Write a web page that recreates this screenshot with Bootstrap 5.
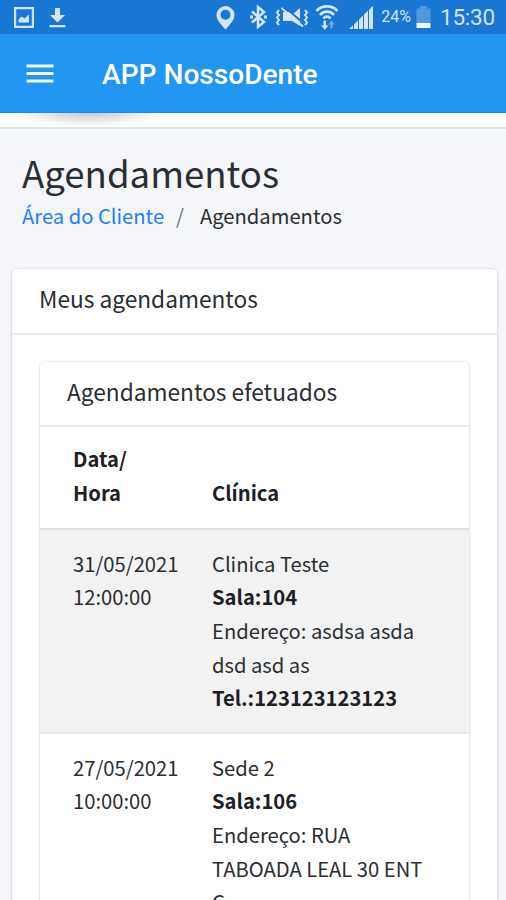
<!DOCTYPE html>
<html lang="pt-BR">
<head>
<meta charset="utf-8">
<meta name="viewport" content="width=device-width, initial-scale=1">
<title>APP NossoDente</title>
<link rel="stylesheet" href="https://cdn.jsdelivr.net/npm/bootstrap@5.3.0/dist/css/bootstrap.min.css">
<style>
  body { background: #f4f6f9; color: #2a2e32; font: 400 20.2px/33.7px "Noto Sans CJK SC", "Noto Sans", sans-serif; height: 900px; overflow: hidden; }
  .status-bar { height: 34px; background: #1976d2; color: #d3e5fa; font-family: Roboto, sans-serif; font-weight: 400; padding: 0 11px 0 14px; line-height: 36px; }
  .status-bar svg { display: block; flex: none; fill: #d3e5fa; }
  .battery-text { font-size: 16px; }
  .clock { font-size: 22.5px; font-weight: 400; letter-spacing: -.2px; }
  .app-bar { height: 79px; background: #2196f3; border-bottom: 1px solid #168be9; padding: 2px 26px 0; }
  .app-title { font: 500 28.1px/79px Roboto, sans-serif; }
  .page-strip { height: 16px; border-bottom: 2px solid #e1e4e7; background: radial-gradient(ellipse 75px 13px at 88px 0, #c9c9c9, #fff0) #fff; }
  .page-head { padding: 22px 22px 0; }
  .page-head h1 { font-size: 36.6px; line-height: 43px; font-weight: inherit; }
  .breadcrumb { --bs-breadcrumb-divider-color: #6c757d; --bs-breadcrumb-item-active-color: #2a2e32; --bs-breadcrumb-item-padding-x: 12px; margin-top: 5px; }
  .breadcrumb .breadcrumb-item + .breadcrumb-item::before { padding-right: 16px; }
  .breadcrumb a { color: #1f80f8; text-decoration: none; }
  .panel { border: 0; border-radius: 5px; background: #fff; color: inherit; box-shadow: 0 0 2px rgba(0,0,0,.16), 0 1px 3px rgba(0,0,0,.14); }
  .panel > .card-header { background: #fff; border-bottom: 2px solid #ebecec; padding: 16px 27px 20px; font-size: 22.7px; line-height: 28px; border-radius: 5px 5px 0 0; }
  .outer-panel { margin: 36px 9px 0 12px; height: 800px; }
  .outer-panel > .card-body { padding: 27px 28px; }
  .outer-panel .outer-panel, .panel .panel > .card-header { padding-bottom: 19px; }
  .schedule { table-layout: fixed; color: inherit; border-color: #e1e4e6; }
  .schedule > :not(caption) > * > * { padding: 17px 33px 16.5px 16px; color: inherit; border-bottom: 0; box-shadow: none; }
  .schedule > :not(caption) > * > :first-child { padding-left: 33px; padding-right: 12px; width: 156px; }
  .schedule thead th { padding-top: 15.5px !important; padding-bottom: 18px !important; vertical-align: bottom; border-bottom: 2px solid #dee2e6 !important; }
  .schedule th, .schedule b { font-weight: 700; color: #1c2024 !important; }
  .schedule tbody tr:first-child td { background: #f2f2f2; border-bottom: 2px solid #e6e9eb; }
</style>
<script src="https://cdn.jsdelivr.net/npm/bootstrap@5.3.0/dist/js/bootstrap.bundle.min.js"></script>
</head>
<body>
<div class="status-bar d-flex align-items-center">
  <svg width="20" height="21" viewBox="0 0 20 21"><path fill-rule="evenodd" d="M0 0h20v21H0zM2.200 2.200v16.600h15.600V2.200zM4.500 15.500v-3l3-3 3 2 4.500-4v8z"/></svg>
  <svg style="margin-left:15px" width="17" height="21" viewBox="0 0 17 21"><path d="M6 1h5v7h5l-7.500 7.500L1 8h5zM.5 18h16v2.300H.5z"/></svg>
  <div class="d-flex align-items-center ms-auto">
    <svg width="19" height="25" viewBox="0 0 19 25"><path fill-rule="evenodd" d="M9.500 1a9 9 0 0 1 9 9c0 5-4.500 9.500-9 14.500C5 19.500.5 15 .5 10a9 9 0 0 1 9-9zm0 3.800a5 5 0 1 0 0 10 5 5 0 0 0 0-10z"/></svg>
    <svg width="17" height="24" viewBox="0 0 17 24" style="margin-left:15px"><path d="M2 6.500l12 10.500-6 5V2l6 5L2 17.500" style="fill:none;stroke:#d3e5fa;stroke-width:2.500"/><path d="M0 10.500h3v3H0zM14 10.500h3v3h-3z"/></svg>
    <svg width="34" height="22" viewBox="0 0 34 22" style="margin-left:8px"><path d="M8 6h6l4 2 7-6v18l-8-5H8z"/><path d="M8.500 0L30 18.500" style="stroke:#1976d2;stroke-width:2"/><path d="M6.500 2L28 20.500M4 4l-2 2.500L4 9l-2 2.500L4 14l-2 2.500L4 19M30 4l2 2.500L30 9l2 2.500-2 2.500 2 2.500L30 19" style="fill:none;stroke:#d3e5fa;stroke-width:2"/></svg>
    <svg width="24" height="26" viewBox="0 0 24 26" style="margin-left:6px"><path d="M1.500 7C7 .8 17 .8 22.500 7M5 11c3.500-4.500 10.500-4.500 14 0M8.500 14.500c2-2.500 5-2.500 7 0" style="fill:none;stroke:#d3e5fa;stroke-width:2.700"/><path d="M8.500 16.500h2.500v5h2.500l-3.700 4.300L6 21.500h2.500z"/><path d="M15.500 24.500v-4h-2l3-4 3 4h-2v4z" opacity=".5"/></svg>
    <svg width="24" height="23" viewBox="0 0 24 23" style="margin-left:10px"><path d="M0 23l4-3.800V23zM5 18.500l4-3.900V23H5zM10 13.500l4-3.900V23h-4zM15 8.500l4-3.800V23h-4zM20 3.800L24 0v23h-4z"/></svg>
    <span class="battery-text" style="margin-left:8px">24%</span>
    <svg width="15" height="22" viewBox="0 0 15 22" style="margin-left:5px"><path d="M4 0h7v2.500h3.500V17H.5V2.500H4z" fill="#4f9ade"/><path d="M.5 17h14v5H.5z" fill="#f4f9ff"/></svg>
    <span class="clock" style="margin-left:9px">15:30</span>
  </div>
</div>
<nav class="app-bar d-flex align-items-center text-white">
  <svg width="28" height="20" viewBox="0 0 28 20" fill="#f2f9ff"><path d="M.5.5h27v3H.5zM.5 8h27v3H.5zM.5 15.500h27v3H.5z"/></svg>
  <span class="app-title" style="margin-left:48px">APP NossoDente</span>
</nav>
<div class="page-strip"></div>
<header class="page-head">
  <h1 class="m-0">Agendamentos</h1>
  <ol class="breadcrumb mb-0">
    <li class="breadcrumb-item"><a href="#">Área do Cliente</a></li>
    <li class="breadcrumb-item active">Agendamentos</li>
  </ol>
</header>
<main class="card panel outer-panel">
  <div class="card-header">Meus agendamentos</div>
  <div class="card-body">
    <section class="card panel">
      <div class="card-header">Agendamentos efetuados</div>
      <table class="table schedule mb-0">
        <thead><tr><th>Data/<br>Hora</th><th>Clínica</th></tr></thead>
        <tbody>
          <tr>
            <td>31/05/2021 12:00:00</td>
            <td>Clinica Teste<br><b>Sala:104</b><br>Endereço: asdsa asda dsd asd as<br><b>Tel.:123123123123</b></td>
          </tr>
          <tr>
            <td>27/05/2021 10:00:00</td>
            <td>Sede 2<br><b>Sala:106</b><br>Endereço: RUA<br>TABOADA LEAL 30 ENT<br>C</td>
          </tr>
        </tbody>
      </table>
    </section>
  </div>
</main>
</body>
</html>
